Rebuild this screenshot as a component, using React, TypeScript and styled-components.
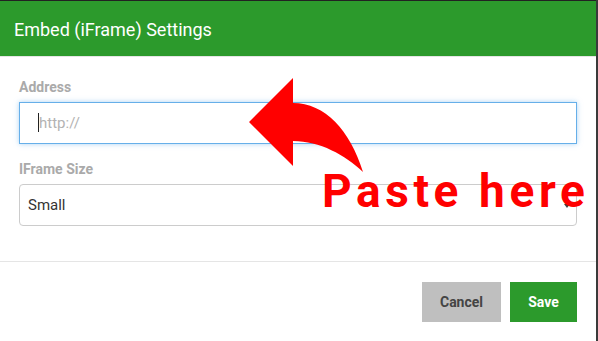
import React from "react";
import styled, { createGlobalStyle } from "styled-components";

const Global = createGlobalStyle`
  html, body { margin: 0; padding: 0; background: #fff; }
  body { font-family: Roboto, "Liberation Sans", Arial, sans-serif; }
  * { box-sizing: border-box; }
`;

const Page = styled.div`
  position: relative;
  width: 598px;
  height: 341px;
  overflow: hidden;
  background: #fff;
  border-right: 2px solid #3a3a3a;
  display: flex;
  flex-direction: column;
`;

const Header = styled.div`
  height: 57px;
  flex: none;
  border-top: 1px solid #222;
  border-bottom: 1px solid #e5e5e5;
  background: #2c9a2c;
  color: #fff;
  display: flex;
  align-items: center;
  padding-left: 14px;
  padding-top: 1px;
  font-size: 18px;
  font-weight: 400;
`;

const Body = styled.div`
  padding: 20px 19px 35px 19px;
  display: flex;
  flex-direction: column;
  border-bottom: 1px solid #e5e5e5;
`;

const Label = styled.label<{ $gap?: number }>`
  display: block;
  font-size: 14px;
  line-height: 20px;
  font-weight: 700;
  color: #aaa;
  margin-top: ${(p) => p.$gap ?? 0}px;
  margin-bottom: 5px;
`;

const InputWrap = styled.div`
  position: relative;
`;

const TextInput = styled.input`
  width: 100%;
  height: 42px;
  border: 1px solid #66afe9;
  border-radius: 0;
  box-shadow: 0 0 5px rgba(102, 175, 233, 0.55);
  outline: none;
  padding: 0 0 0 19px;
  font-family: inherit;
  font-size: 15px;
  color: #333;
  &::placeholder { color: #b3b3b3; }
`;

const Caret = styled.span`
  position: absolute;
  left: 19px;
  top: 11px;
  width: 1px;
  height: 19px;
  background: #222;
`;

const SelectBox = styled.div`
  position: relative;
  height: 42px;
  border: 1px solid #ccc;
  border-radius: 4px;
  display: flex;
  align-items: center;
  padding-left: 8px;
  font-size: 15px;
  color: #333;
`;

const Chevron = styled.span`
  position: absolute;
  right: 6px;
  top: 19px;
  width: 0;
  height: 0;
  border-left: 3px solid transparent;
  border-right: 3px solid transparent;
  border-top: 4px solid #444;
`;

const Footer = styled.div`
  display: flex;
  justify-content: flex-end;
  gap: 9px;
  padding: 20px 19px 0 0;
`;

const Button = styled.button<{ $primary?: boolean; $w: number }>`
  width: ${(p) => p.$w}px;
  height: 40px;
  border: none;
  border-radius: 0;
  font-family: inherit;
  font-size: 14px;
  font-weight: 700;
  background: ${(p) => (p.$primary ? "#2c9a2c" : "#bfbfbf")};
  color: ${(p) => (p.$primary ? "#fff" : "#444")};
`;

const Arrow = styled.svg`
  position: absolute;
  left: 240px;
  top: 70px;
  width: 130px;
  height: 110px;
  pointer-events: none;
`;

const Annotation = styled.div`
  position: absolute;
  left: 322px;
  top: 168px;
  font-size: 46px;
  line-height: 46px;
  font-weight: 700;
  letter-spacing: 4.6px;
  color: #ff0000;
  white-space: nowrap;
  pointer-events: none;
`;

export default function App() {
  return (
    <>
      <Global />
      <Page>
        <Header>Embed (iFrame) Settings</Header>
        <Body>
          <Label>Address</Label>
          <InputWrap>
            <TextInput placeholder="http://" readOnly />
            <Caret />
          </InputWrap>
          <Label $gap={15}>IFrame Size</Label>
          <SelectBox>
            Small
            <Chevron />
          </SelectBox>
        </Body>
        <Footer>
          <Button $w={79}>Cancel</Button>
          <Button $w={67} $primary>
            Save
          </Button>
        </Footer>
        <Arrow viewBox="240 70 130 110">
          <path
            d="M249,122 L293,78 L293,103 C325,103 350,130 363,172 C345,155 320,141 293,141 L293,166 Z"
            fill="#ff0000"
          />
        </Arrow>
        <Annotation>Paste here</Annotation>
      </Page>
    </>
  );
}
